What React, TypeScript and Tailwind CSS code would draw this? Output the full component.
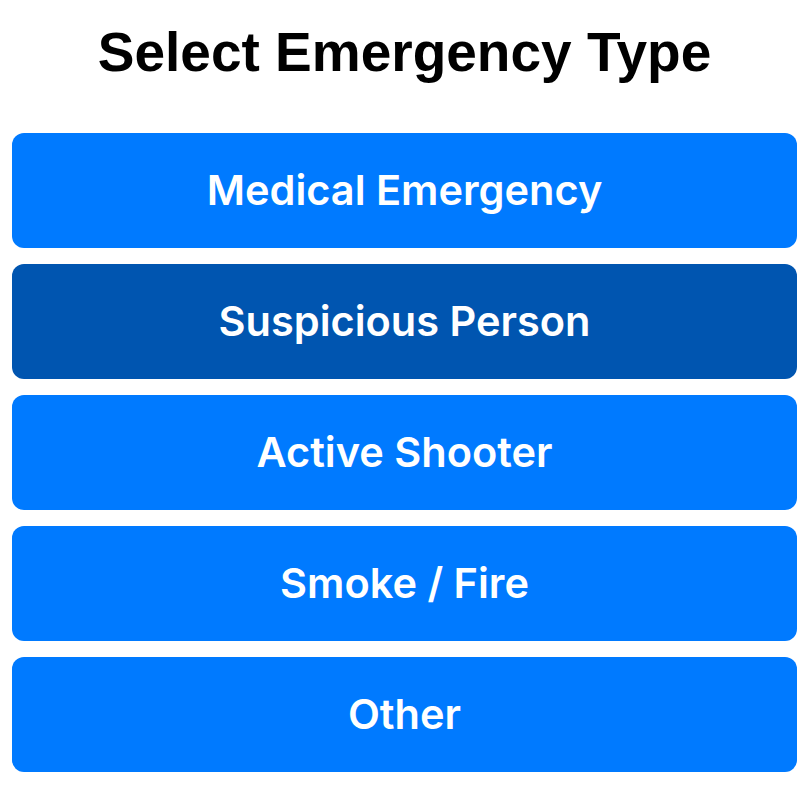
import { useState } from 'react';

const types = ['Medical Emergency', 'Suspicious Person', 'Active Shooter', 'Smoke / Fire', 'Other'];

// emergency type picker
const App = () => {
  const [selected, setSelected] = useState(1);

  return (
    <div className="min-h-screen bg-white px-[12px] pt-[25px]">
      <h1 className="text-center text-[55px] leading-[55px] font-bold text-black font-['Liberation_Sans',Arial,sans-serif]">
        Select Emergency Type
      </h1>
      <div className="mt-[53px] flex flex-col gap-[16px]">
        {types.map((t, i) => (
          <button
            key={t}
            onClick={() => setSelected(i)}
            className={
              'h-[115px] w-full rounded-[12px] text-white text-[41.5px] font-semibold font-[Inter,sans-serif] flex items-center justify-center ' +
              (i === selected ? 'bg-[#0055B0]' : 'bg-[#007AFF]')
            }
          >
            {t}
          </button>
        ))}
      </div>
    </div>
  );
};

export default App;
